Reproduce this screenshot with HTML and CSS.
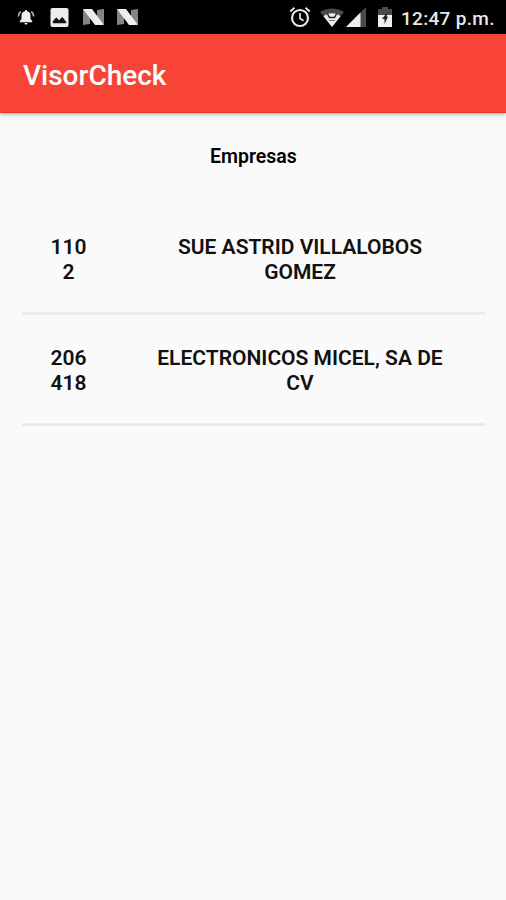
FILE: index.html
```html
<!DOCTYPE html>
<html lang="es">
<head>
  <meta charset="UTF-8">
  <meta name="viewport" content="width=device-width, initial-scale=1.0">
  <title>VisorCheck</title>
  <link rel="stylesheet" href="styles.css">
</head>
<body>
  <div class="status-bar">
    <div class="notifications">
      <svg class="icon-bell" width="18" height="18" viewBox="0 0 18 18">
        <path d="M9 2c-.8 0-1.1.5-1.1 1.200C5.300 3.800 4.500 5.500 4.500 7.500v3.500L2.800 13v1.300h12.400v-1.300l-1.700-2V7.500c0-2-.8-3.700-3.400-4.300C10.100 2.500 9.800 2 9 2zM7.500 15h3c0 2-3 2-3 0z" fill="#eee"/>
        <path d="M3.800 3.500C2.200 4.500 1.500 6 1.300 8.500M14.200 3.500c1.600 1 2.300 2.500 2.500 5" fill="none" stroke="#aaa" stroke-width="1.700"/>
      </svg>
      <svg class="icon-picture" width="19" height="19" viewBox="0 0 19 20">
        <rect width="19" height="20" rx="2" fill="#ececec"/>
        <path d="M2.500 16v-2l3.500-4 3 3 3.500-3.500 4 5V16z" fill="#111"/>
      </svg>
      <svg class="icon-n" width="21" height="16" viewBox="0 0 21 16">
        <path d="M0 1h7v14l-7 1zM14 1l7-1v15h-7z" fill="#858585"/>
        <path d="M0 0h9l12 16h-9z" fill="#eee"/>
      </svg>
      <svg class="icon-n" width="21" height="16" viewBox="0 0 21 16">
        <path d="M0 1h7v14l-7 1zM14 1l7-1v15h-7z" fill="#858585"/>
        <path d="M0 0h9l12 16h-9z" fill="#eee"/>
      </svg>
    </div>
    <div class="system">
      <svg class="icon-alarm" width="22" height="22" viewBox="0 0 22 22" fill="none" stroke="#e6e6e6">
        <circle cx="11" cy="12" r="8" stroke-width="2.200"/>
        <path d="M11 7v5.500l3.500 2.300" stroke-width="1.700"/>
        <path d="M1.200 5.500l4.300-3.700M20.800 5.500l-4.300-3.700" stroke-width="2"/>
      </svg>
      <svg class="icon-wifi" width="24" height="19" viewBox="0 0 24 19">
        <path d="M0 4C7-.8 17-.8 24 4L12 19z" fill="#4a4a4a"/>
        <path d="M3.500 8.200C8 4.300 16 4.300 20.500 8.200L12 19z" fill="#eee"/>
        <path d="M7.500 6l2 3.500h5l2-3.500" fill="none" stroke="#222" stroke-width="1.500"/>
        <path d="M9 12.500h6" stroke="#777" stroke-width="1"/>
      </svg>
      <svg class="icon-signal" width="20" height="20" viewBox="0 0 20 20">
        <path d="M20 0v20H0z" fill="#4a4a4a"/>
        <path d="M14.500 5.500V20H0z" fill="#eee"/>
      </svg>
      <svg class="icon-battery" width="14" height="20" viewBox="0 0 14 20">
        <path d="M4 0h6v2h4v18H0V2h4z" fill="#4a4a4a"/>
        <path d="M0 8h14v12H0z" fill="#eee"/>
        <path d="M9.500 5L4 12h2.500v5L10 9.500H8.500z" fill="#222"/>
      </svg>
      <span class="clock">12:47 p.m.</span>
    </div>
  </div>

  <header class="app-bar">
    <h1>VisorCheck</h1>
  </header>

  <main>
    <h2>Empresas</h2>
    <div class="company">
      <div class="company-id">110<br>2</div>
      <div class="company-name">SUE ASTRID VILLALOBOS GOMEZ</div>
    </div>
    <div class="company">
      <div class="company-id">206<br>418</div>
      <div class="company-name">ELECTRONICOS MICEL, SA DE CV</div>
    </div>
  </main>
</body>
</html>
```
FILE: styles.css
```css
* {
  box-sizing: border-box;
}

body {
  margin: 0;
  min-height: 100vh;
  background-color: #fafafa;
  color: #111;
  font-family: Roboto, sans-serif;
}

svg {
  display: block;
  flex-shrink: 0;
}

.status-bar {
  display: flex;
  justify-content: space-between;
  height: 34px;
  padding: 0 11px 0 17px;
  background-color: #000;
}

.notifications,
.system {
  display: flex;
  align-items: center;
}

.icon-picture {
  margin-left: 15px;
}

.icon-n {
  margin-left: 14px;
}

.icon-n + .icon-n {
  margin-left: 13px;
}

.icon-wifi {
  margin-left: 9px;
}

.icon-signal {
  margin-left: 2px;
}

.icon-battery {
  margin-left: 12px;
}

.clock {
  width: 94px;
  margin: 2px 0 0 9px;
  color: #e8e8e8;
  font-size: 19px;
  font-weight: 500;
  letter-spacing: 0.3px;
  white-space: nowrap;
}

.app-bar {
  display: flex;
  align-items: center;
  height: 79px;
  padding: 5px 23px 0;
  background-color: #f74437;
  border-bottom: 1px solid #dd3b2c;
  box-shadow: 0 1px 4px rgba(0, 0, 0, 0.35);
}

.app-bar h1 {
  margin: 0;
  color: #fff;
  font-size: 28px;
  font-weight: 500;
}

main {
  padding: 31px 21px 0 22px;
}

h2 {
  margin: 0 0 35px;
  color: #000;
  font-size: 19.5px;
  font-weight: 600;
  line-height: 25px;
  text-align: center;
}

.company {
  display: flex;
  height: 111px;
  padding-top: 31px;
  border-bottom: 3px solid #ebebeb;
  font-size: 21px;
  font-weight: 600;
  line-height: 25px;
  text-align: center;
}

.company-id {
  width: 93px;
}

.company-name {
  width: 300px;
  margin-left: 35px;
}
```
